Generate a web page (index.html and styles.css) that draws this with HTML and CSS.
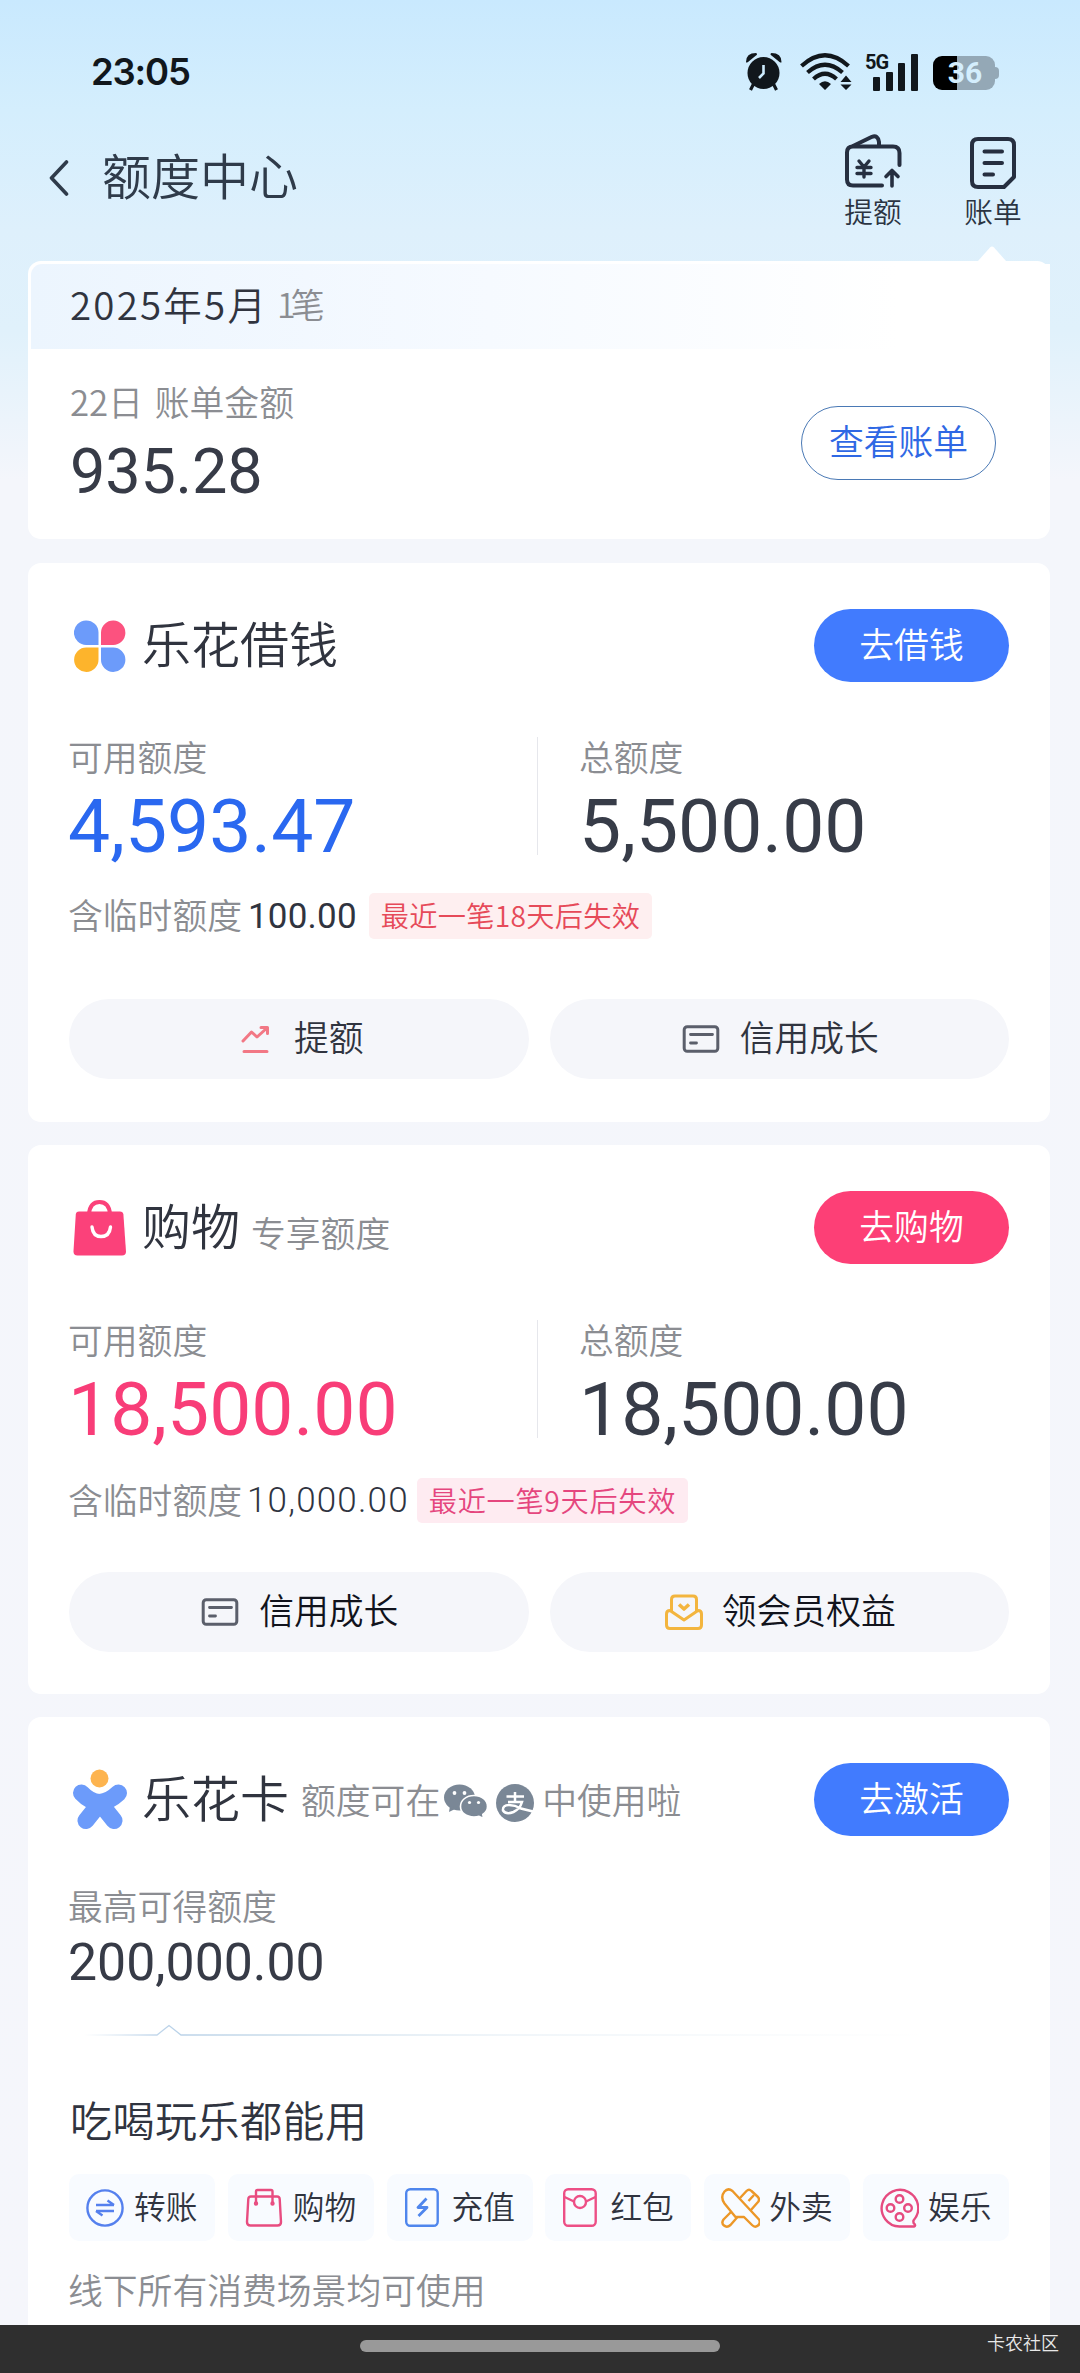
FILE: index.html
```html
<!DOCTYPE html>
<html lang="zh-CN">
<head>
<meta charset="utf-8">
<title>额度中心</title>
<link rel="stylesheet" href="styles.css">
</head>
<body>
<svg width="0" height="0" class="defs" aria-hidden="true">
  <symbol id="i-card" viewBox="0 0 37 28"><rect x="1.7" y="1.7" width="33.6" height="24.6" rx="3" fill="none" stroke="#5b5f6b" stroke-width="3"/><path d="M8 9.5H30M8 18H14" fill="none" stroke="#5b5f6b" stroke-width="2.8" stroke-linecap="round"/></symbol>
</svg>
<div class="status">
  <span class="clock">23:05</span>
  <div class="indicators">
    <svg class="i-alarm" width="38" height="39" viewBox="0 0 38 39"><g fill="#11171c"><circle cx="18.500" cy="21" r="16"/><path d="M1 10Q1 1 11 1Q13 2 11 3.500L3 10Q1 11 1 10ZM36.500 10Q36.500 1 26.500 1Q24.500 2 26.500 3.500L34.500 10Q36.500 11 36.500 10Z"/><path d="M9 31L5.500 38M28 31L31.500 38" stroke="#11171c" stroke-width="3.200"/></g><path d="M18.500 13V21.500L14 26" fill="none" stroke="#cdecfe" stroke-width="2.600"/></svg>
    <svg class="i-wifi" width="52" height="37" viewBox="0 0 52 37"><g fill="none" stroke="#11171c" stroke-width="4.200"><path d="M1.500 13Q25 -8.500 48.500 13"/><path d="M7.500 19.500Q25 4 42.500 19.500"/><path d="M13.500 26Q25 15.500 36.500 26"/></g><path d="M25 37L19 31Q25 25.500 31 31ZM40.500 29L46 22.500L51.500 29ZM40.500 31.500L46 37L51.500 31.500Z" fill="#11171c"/></svg>
    <div class="signal"><span>5G</span>
      <svg width="47" height="37" viewBox="0 0 47 37" fill="#11171c"><rect x="1" y="23" width="7" height="14" rx="1"/><rect x="14" y="18" width="7" height="19" rx="1"/><rect x="26" y="9" width="7" height="28" rx="1"/><rect x="39" y="0" width="7" height="37" rx="1"/></svg>
    </div>
    <div class="battery"><span>36</span></div>
  </div>
</div>
<header class="nav">
  <svg class="back" width="20" height="36" viewBox="0 0 20 36"><path d="M17.500 2L2.500 18L17.500 34" fill="none" stroke="#2f3b4a" stroke-width="3.600" stroke-linecap="round" stroke-linejoin="round"/></svg>
  <h1>额度中心</h1>
  <div class="nav-item raise">
    <svg width="58" height="54" viewBox="0 0 58 54" fill="none" stroke="#262f40" stroke-width="4" stroke-linecap="round" stroke-linejoin="round"><path d="M38 51.500H9Q3 51.500 3 45.500V18.500Q3 12.500 9 12.500H49Q55.500 12.500 55.500 19V31"/><path d="M9 12L28 2.800Q34 .8 35 8V12"/><path d="M15 27L20 33L25 27M13 33.500H27M13 39.500H27M20 33V43" stroke-width="3.400"/><path d="M48 52V37M42 42.500L48 36.500L54 42.500" stroke-width="3.600"/></svg>
    <span>提额</span>
  </div>
  <div class="nav-item bill">
    <svg width="46" height="52" viewBox="0 0 46 52" fill="none" stroke="#262f40" stroke-width="4" stroke-linecap="round" stroke-linejoin="round"><path d="M8 2H38Q44 2 44 8V40L34 50H8Q2 50 2 44V8Q2 2 8 2Z"/><path d="M14.500 14.500H32M14.500 26H32M14.500 37.500H23"/></svg>
    <span>账单</span>
  </div>
</header>
<main>
  <section class="card bill-card">
    <svg class="pointer" width="28" height="15" viewBox="0 0 28 15"><path d="M0 15L12 1.500Q14 -.5 16 1.500L28 15Z" fill="#fff"/></svg>
    <div class="month"><b>2025年5月</b><span>1笔</span></div>
    <div class="bill-body">
      <div class="bill-sum"><span class="label">22日 账单金额</span><span class="sum">935.28</span></div>
      <a class="outline-btn">查看账单</a>
    </div>
  </section>

  <section class="card loan">
    <div class="head">
      <svg class="logo" width="52" height="52" viewBox="0 0 52 52"><path d="M24.500 25H12.500A12.300 12.300 0 1 1 24.500 12.500Z" fill="#6c9bfa"/><path d="M27 25V12.500A12.200 12.200 0 1 1 39 25Z" fill="#fc527f"/><path d="M24.500 27.500V39.500A12.200 12.200 0 1 1 12.500 27.500Z" fill="#fdb42c"/><path d="M27 27.500H39A12.200 12.200 0 1 1 27 39.500Z" fill="#6c9bfa"/></svg>
      <h2>乐花借钱</h2>
      <a class="btn blue">去借钱</a>
    </div>
    <div class="stats">
      <div class="stat"><span class="label">可用额度</span><span class="value c-blue">4,593.47</span></div>
      <div class="stat total"><span class="label">总额度</span><span class="value">5,500.00</span></div>
    </div>
    <div class="temp"><span class="label">含临时额度</span><span class="amount">100.00</span><span class="tag red">最近一笔18天后失效</span></div>
    <div class="actions">
      <a class="pill"><svg class="i-trend" width="30" height="30" viewBox="0 0 30 30" fill="none" stroke="#f27885" stroke-width="3" stroke-linecap="round" stroke-linejoin="round"><path d="M2 17L10.500 8L16 13L26 4M20 3.500H26.500V9.500M3 27.500H26"/></svg><span>提额</span></a>
      <a class="pill"><svg class="i-credit" width="38" height="28"><use href="#i-card"/></svg><span>信用成长</span></a>
    </div>
  </section>

  <section class="card shop">
    <div class="head">
      <svg class="logo" width="54" height="56" viewBox="0 0 54 56"><path d="M16 14Q17 2 26.500 2Q36 2 37 14" fill="none" stroke="#fb417a" stroke-width="4"/><path d="M6 11.500H47Q50 11.500 50.400 14.500L53 51.500Q53 55.500 49 55.500H4.500Q.5 55.500 .5 51.500L2.800 14.500Q3 11.500 6 11.500Z" fill="#fb417a"/><path d="M19 27Q20 36.500 28 36.500Q36.500 36.500 37.500 27" fill="none" stroke="#fff" stroke-width="3.400" stroke-linecap="round"/></svg>
      <h2>购物</h2><span class="sub low">专享额度</span>
      <a class="btn pink">去购物</a>
    </div>
    <div class="stats">
      <div class="stat"><span class="label">可用额度</span><span class="value c-pink">18,500.00</span></div>
      <div class="stat total"><span class="label">总额度</span><span class="value">18,500.00</span></div>
    </div>
    <div class="temp"><span class="label">含临时额度</span><span class="amount thin">10,000.00</span><span class="tag rose">最近一笔9天后失效</span></div>
    <div class="actions dark">
      <a class="pill"><svg class="i-credit" width="38" height="28"><use href="#i-card"/></svg><span>信用成长</span></a>
      <a class="pill"><svg class="i-gift" width="38" height="36" viewBox="0 0 38 36" fill="none" stroke="#f3b53e" stroke-width="3" stroke-linejoin="round"><path d="M6.500 17.500V5.500Q6.500 2 10 2H28Q31.500 2 31.500 5.500V17.500"/><path d="M5 16.500Q1.500 16.500 1.500 20V31Q1.500 34.500 5 34.500H33Q36.500 34.500 36.500 31V20Q36.500 16.500 33 16.500L19 26Z"/><path d="M14 10.500L19 15L24 10.500" stroke-width="3.600"/></svg><span>领会员权益</span></a>
    </div>
  </section>

  <section class="card pay">
    <div class="head">
      <svg class="logo" width="56" height="61" viewBox="0 0 56 61"><circle cx="27.500" cy="9.500" r="9" fill="#fdb44f"/><g stroke="#6c9bfa" stroke-width="17" stroke-linecap="round" fill="none"><path d="M9.500 24Q18 33 27.500 33.500Q37 33 46.500 24"/><path d="M28 34L14 51.500M28 34L42 51.500"/></g><path d="M20 32H36V44H20Z" fill="#6c9bfa"/></svg>
      <h2>乐花卡</h2>
      <span class="sub first">额度可在</span>
      <svg class="i-wechat" width="44" height="35" viewBox="0 0 44 35"><g fill="#7a8796"><ellipse cx="15.500" cy="13.500" rx="15.500" ry="13"/><path d="M6 22L5 28L13 24Z"/></g><g fill="#7a8796" stroke="#fff" stroke-width="1.600"><path d="M30 11.500C22 11.500 16.500 16.500 16.500 22.500S22 33 30 33Q33 33 35 32.300L39.500 34.500L38.800 30.500Q43.500 27.500 43.500 22.500C43.500 16.500 38 11.500 30 11.500Z"/></g><g fill="#fff"><circle cx="10.500" cy="9" r="1.900"/><circle cx="20.500" cy="9" r="1.900"/><circle cx="25.500" cy="18.500" r="1.600"/><circle cx="34.500" cy="18.500" r="1.600"/></g></svg>
      <svg class="i-alipay" width="38" height="38" viewBox="0 0 38 38"><circle cx="19" cy="19" r="19" fill="#7a8796"/><g fill="none" stroke="#fff" stroke-width="2.500"><path d="M10.500 12.500H28M19 8V18M12 18H26Q24 25 17.500 28Q10 31 7 26.500Q6.500 21 13 21Q19 21 25 24.500L37 27.500"/></g></svg>
      <span class="sub last">中使用啦</span>
      <a class="btn blue">去激活</a>
    </div>
    <span class="label max-label">最高可得额度</span>
    <span class="max">200,000.00</span>
    <svg class="rule" width="920" height="12" viewBox="0 0 920 12"><defs><linearGradient id="fade" gradientUnits="userSpaceOnUse" x1="15" y1="0" x2="860" y2="0"><stop offset="0" stop-color="#b9d1e8" stop-opacity="0"/><stop offset=".1" stop-color="#b9d1e8"/><stop offset=".22" stop-color="#c8dbea"/><stop offset=".5" stop-color="#dfeaf3" stop-opacity=".6"/><stop offset="1" stop-color="#dfeaf3" stop-opacity="0"/></linearGradient></defs><path d="M15 11H88L100 1.500L112 11H860" fill="none" stroke="url(#fade)" stroke-width="1.300"/></svg>
    <h3>吃喝玩乐都能用</h3>
    <div class="chips">
      <div class="chip"><svg width="40" height="40" viewBox="0 0 40 40" fill="none" stroke="#5580ee" stroke-width="2.400"><circle cx="20" cy="20" r="17.600"/><path d="M11 17H29M22.500 12.500L29 17M29 23H11M17.500 27.500L11 23"/></svg><span>转账</span></div>
      <div class="chip"><svg width="40" height="40" viewBox="0 0 40 40" fill="none" stroke="#e84c80" stroke-width="2.400"><path d="M7 8.500H33Q35.500 8.500 35.700 11L37 34Q37 37.500 33.500 37.500H6.500Q3 37.500 3 34L4.300 11Q4.500 8.500 7 8.500Z"/><path d="M12 15.500V3.500Q12 2 13.500 2H27Q28.500 2 28.500 3.500V15.500"/><circle cx="12" cy="15.500" r="1"/><circle cx="28.500" cy="15.500" r="1"/></svg><span>购物</span></div>
      <div class="chip"><svg width="40" height="40" viewBox="0 0 40 40" fill="none" stroke="#4f86ed" stroke-width="2.400"><rect x="3.200" y="1.200" width="31.500" height="36.500" rx="4"/><path d="M23.500 10.500L15 19.500H24L15.500 28" stroke-width="2.800" stroke-linejoin="round"/></svg><span>充值</span></div>
      <div class="chip"><svg width="40" height="40" viewBox="0 0 40 40" fill="none" stroke="#ed4f86" stroke-width="2.400"><rect x="3.200" y="1.200" width="31.500" height="36.500" rx="4"/><circle cx="19" cy="14" r="6"/><path d="M3.500 9L13 13.500M34.500 9L25 13.500"/></svg><span>红包</span></div>
      <div class="chip"><svg width="40" height="40" viewBox="0 0 40 40" fill="none" stroke="#ec9727" stroke-width="2.400" stroke-linejoin="round"><path d="M20 10L26.500 3Q29 .5 31.500 3L38 9Q40 11.500 38 14L30.500 22.500"/><path d="M34 7L28.500 13"/><path d="M4.500 3.500Q8 -.5 12.500 3L39 31.500Q41 35 38 37.500Q35 40 32 37L24 29H15.500L4.500 15.500Q0 9 4.500 3.500Z"/><path d="M11.500 23.500L3.500 31.500Q1 35 4 37.500Q7 40 10.500 37L17.500 29"/></svg><span>外卖</span></div>
      <div class="chip"><svg width="40" height="40" viewBox="0 0 40 40" fill="none" stroke="#e64b80" stroke-width="2.400"><path d="M34.500 32.500A18.300 18.300 0 1 0 20.500 38.500H35Q37 38 35.500 36Q34 35 34.500 32.500Z"/><circle cx="20.500" cy="11" r="3.800"/><circle cx="11.500" cy="20" r="3.800"/><circle cx="29" cy="20" r="3.800"/><circle cx="20.500" cy="29" r="3.800"/></svg><span>娱乐</span></div>
    </div>
    <p class="label note">线下所有消费场景均可使用</p>
  </section>
</main>
<footer><i class="handle"></i><span>卡农社区</span></footer>
</body>
</html>
```

FILE: styles.css
```css
* { box-sizing: border-box; }
body {
  margin: 0;
  width: 1080px;
  height: 2373px;
  display: flex;
  flex-direction: column;
  overflow: hidden;
  font-family: "Noto Sans CJK SC", sans-serif;
  font-weight: 350;
  color: #30343f;
  background: linear-gradient(#c9e9fe 0, #d4eefd 110px, #def0fc 230px, #e0f1fb 330px, #f4f6fb 480px, #f5f6fb 100%);
}
h1, h2, h3, p { margin: 0; font-weight: 350; }
svg { display: block; flex: none; }
.defs { position: absolute; }

.status { display: flex; justify-content: space-between; height: 120px; padding: 51px 81px 0 91px; flex: none; }
.clock { font: 600 36.500px/42px Inter, sans-serif; letter-spacing: -1.200px; color: #11171c; }
.indicators { display: flex; align-items: flex-start; }
.i-alarm { margin: 1px 17px 0 0; }
.i-wifi { margin: 2px 14px 0 0; }
.signal { position: relative; width: 53px; padding: 3px 0 0 6px; margin-right: 14px; }
.signal span { position: absolute; left: -1px; top: 1px; font: 700 20px/20px Roboto, sans-serif; letter-spacing: -1px; color: #11171c; }
.battery {
  width: 66px; height: 34px; margin-top: 5px;
  display: flex; align-items: center; justify-content: center;
  padding-right: 2px;
  position: relative;
  font: 700 30px/34px Roboto, sans-serif; color: #d4eefd;
}
.battery::before { content: ""; position: absolute; inset: 0 4px 0 0; border-radius: 9px; background: linear-gradient(90deg, #000 24px, #94a8b6 24px); }
.battery::after { content: ""; position: absolute; right: 0; top: 11px; width: 4px; height: 12px; border-radius: 0 4px 4px 0; background: #94a8b6; }
.battery span { position: relative; }

.nav { display: flex; height: 141px; padding-left: 49px; flex: none; }
.back { margin-top: 40px; }
.nav h1 { margin: 19px auto 0 33px; font-size: 49px; line-height: 70px; color: #2f3b4a; }
.nav-item { display: flex; flex-direction: column; align-items: center; width: 58px; font-size: 28.700px; line-height: 36px; color: #2b3442; }
.nav-item span { margin-top: 5px; }
.raise { padding-top: 14px; margin-right: 62px; }
.bill { padding-top: 17px; margin-right: 58px; }
.bill span { margin-top: 4px; }

main { flex: 1; min-height: 0; display: flex; flex-direction: column; padding: 0 30px 0 28px; }
.card { background: #fff; border-radius: 13px; padding: 46px 41px 0; flex: none; }
.label { color: #8b8d92; font-size: 34.800px; white-space: nowrap; margin-left: -1px; }

.bill-card { position: relative; height: 278px; padding: 3px 0 0 3px; margin-bottom: 24px; }
.pointer { position: absolute; left: 950px; top: -15px; }
.month { display: flex; align-items: center; height: 85px; padding-left: 39px; border-radius: 11px 0 0 0; background: linear-gradient(90deg, #ecf5fe, #f6faff 45%, #fff 85%); }
.month b { font-weight: 350; font-size: 38.500px; letter-spacing: 2.200px; margin-top: -7px; }
.month span { margin: -7px 0 0 9px; font-size: 34px; letter-spacing: -5px; color: #8b8d92; }
.bill-body { display: flex; justify-content: space-between; padding: 32px 54px 0 39px; }
.bill-sum { display: flex; flex-direction: column; }
.bill-sum .label { line-height: 40px; word-spacing: 4px; margin-left: 0; }
.sum { font: 400 63px/64px Roboto, sans-serif; color: #373b47; margin-top: 19px; letter-spacing: -.2px; }
.outline-btn { width: 195px; height: 74px; margin-top: 25px; border: 1.500px solid #4a79b5; border-radius: 37px; color: #2f68e4; font-size: 34.800px; line-height: 67px; text-align: center; }

.loan { height: 559px; margin-bottom: 23px; }
.shop { height: 549px; margin-bottom: 23px; }
.pay { flex: 1; border-radius: 13px 13px 0 0; display: flex; flex-direction: column; }
.head { display: flex; align-items: center; height: 73px; flex: none; }
.logo { margin-left: 5px; }
.loan h2 { margin-left: 16px; }
.shop .logo { margin-left: 4px; }
.shop h2 { margin-left: 15px; }
.pay .logo { margin-left: 3px; }
.pay h2 { margin-left: 14px; }
.head h2 { font-size: 49px; line-height: 70px; margin-top: -8px; }
.sub { color: #8b8d92; font-size: 34.800px; line-height: 50px; white-space: nowrap; }
.sub.low { margin: 9px 0 0 11px; }
.sub.first { margin: -1px 0 0 12px; }
.i-wechat { margin: 3px 8px 0 4px; }
.i-alipay { margin-top: 6px; }
.sub.last { margin: -1px 0 0 8px; }
.btn { width: 195px; height: 73px; margin-left: auto; border-radius: 37px; color: #fff; text-align: center; font-size: 34.800px; line-height: 69px; }
.blue { background: #417bfe; }
.pink { background: #fd3f76; }

.stats { display: grid; grid-template-columns: 468px 1fr; height: 134px; margin-top: 55px; }
.shop .stats { margin-top: 56px; }
.stat { display: flex; flex-direction: column; height: 118px; }
.stat.total { border-left: 1.500px solid #e6e7ec; padding-left: 42px; }
.stat .label { line-height: 38px; }
.value { font: 400 75px/92px Roboto, sans-serif; color: #373c48; margin: 5px 0 0 -1px; }
.c-blue { color: #2a68f0; }
.c-pink { color: #f83d78; }

.temp { display: flex; align-items: center; height: 46px; margin-top: 22px; }
.shop .temp { margin-top: 24px; height: 45px; }
.temp .label { line-height: 42px; margin-top: -4px; }
.amount { font: 400 35px/46px Roboto, sans-serif; margin-left: 6px; }
.loan .amount { letter-spacing: .2px; margin-top: 1px; }
.amount.thin { font-weight: 350; margin-left: 5px; letter-spacing: 1.200px; }
.tag { height: 46px; border-radius: 5px; padding: 0 12px; margin-left: 12px; font-size: 28.200px; line-height: 43px; letter-spacing: .3px; white-space: nowrap; }
.shop .tag { height: 45px; margin-left: 8px; letter-spacing: .7px; }
.tag.red { background: #feeff0; color: #e64a59; }
.tag.rose { background: #feebf1; color: #e5467e; }

.actions { display: grid; grid-template-columns: 1fr 1fr; gap: 21px; margin-top: 60px; }
.shop .actions { margin-top: 49px; }
.pill { display: flex; align-items: center; justify-content: center; height: 80px; border-radius: 40px; background: #f5f6fa; font-size: 34.800px; line-height: 74px; }
.pill span { margin-top: -6px; }
.dark .pill { color: #11131c; }
.i-trend { margin: 0 23px 0 7px; }
.i-credit { margin: 0 20px 0 2px; }
.i-gift { margin: 0 19px 0 2px; }

.max-label { line-height: 36px; margin-top: 51px; }
.max { font: 400 51.800px/60px Roboto, sans-serif; color: #373b47; margin: 10px 0 0 -1px; }
.rule { margin-top: 31px; }
.pay h3 { font-size: 42px; line-height: 50px; margin: 58px 0 30px 1px; letter-spacing: .5px; }
.chips { display: grid; grid-template-columns: repeat(6, 146px); justify-content: space-between; }
.chip { display: flex; align-items: center; height: 67px; border-radius: 10px; padding-left: 16px; background: #f8fbff; font-size: 31.700px; line-height: 60px; white-space: nowrap; }
.chip span { margin: -5px 0 0 9px; }
.note { line-height: 40px; margin-top: 28px; }

footer { flex: none; position: relative; height: 48px; background: #2f2f2f; display: flex; justify-content: flex-end; padding: 5px 21px 0 0; color: #e8e8e8; font-size: 18px; line-height: 24px; }
.handle { position: absolute; left: 360px; top: 15px; width: 360px; height: 12px; border-radius: 6px; background: #999; }
```
